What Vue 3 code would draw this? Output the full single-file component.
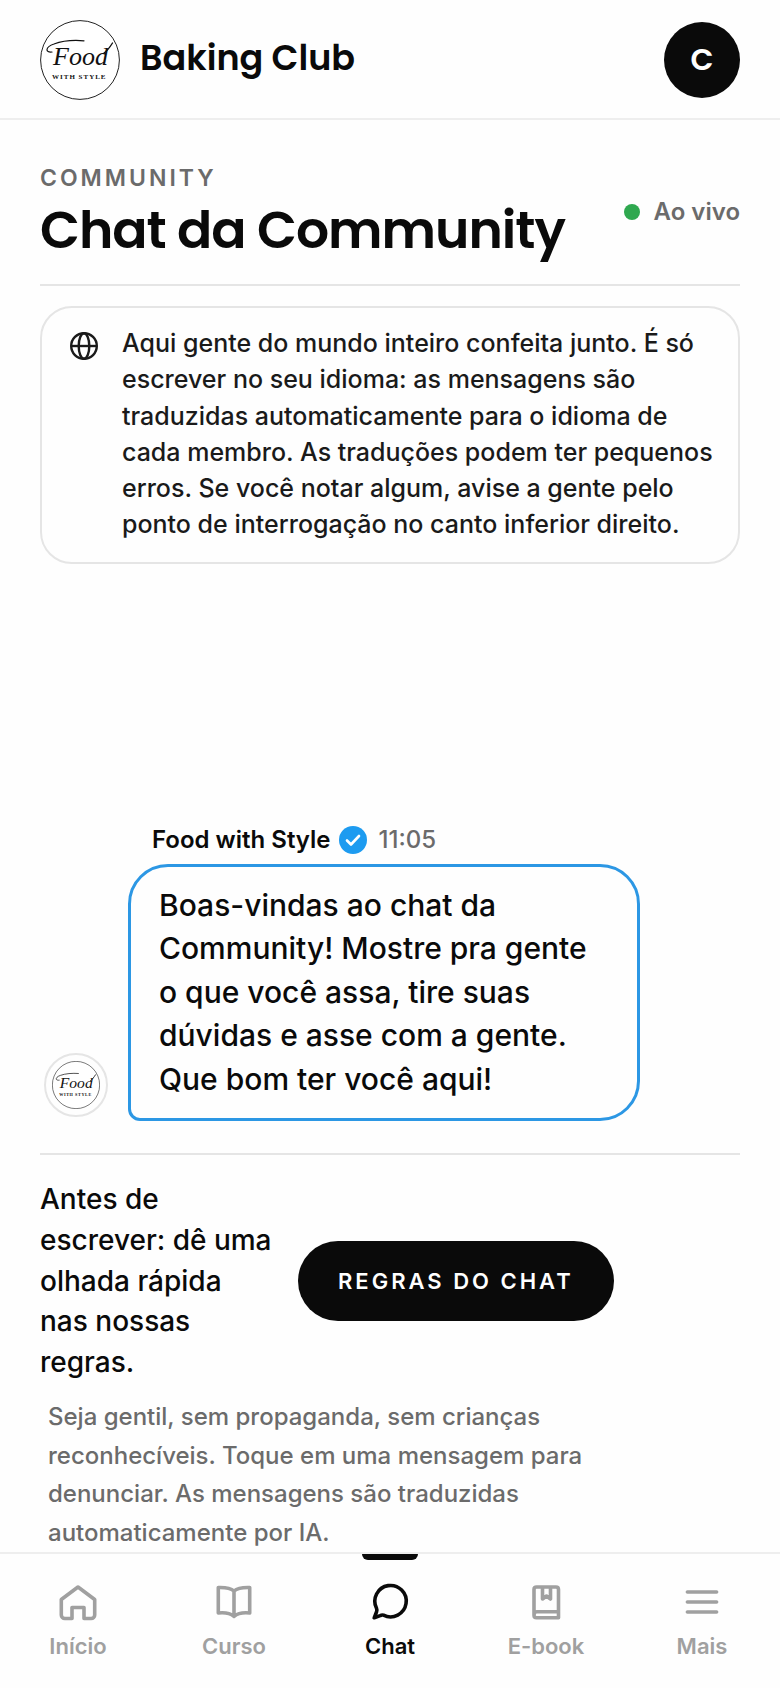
<script setup>
import { h } from 'vue'

const tabs = [
  { id: 'home', label: 'Início' },
  { id: 'course', label: 'Curso' },
  { id: 'chat', label: 'Chat', active: true },
  { id: 'ebook', label: 'E-book' },
  { id: 'more', label: 'Mais' },
]

// Round brand mark, shared by the top bar and the sender's avatar.
const BrandLogo = () =>
  h('svg', { viewBox: '0 0 80 80', role: 'img', 'aria-label': 'Food with Style' }, [
    h('circle', { cx: 40, cy: 40, r: 39.4, fill: '#fff', stroke: '#222', 'stroke-width': 1 }),
    h('path', {
      d: 'M12 32C5 33 5 27 14 24C22 21 34 20 44 20.800',
      fill: 'none',
      stroke: '#111',
      'stroke-width': 1.2,
      'stroke-linecap': 'round',
    }),
    h('text', { x: 13, y: 45, class: 'brand-script' }, 'Food'),
    h('path', {
      d: 'M64 33C67 31 70 27 72.500 23',
      fill: 'none',
      stroke: '#111',
      'stroke-width': 1.4,
      'stroke-linecap': 'round',
    }),
    h('text', { x: 12, y: 59, class: 'brand-caps' }, 'WITH STYLE'),
  ])
</script>

<template>
  <div class="app">
    <header class="topbar">
      <a class="brand" href="#">
        <BrandLogo class="brand-logo" />
        <span class="brand-name">Baking Club</span>
      </a>
      <button class="profile" type="button" aria-label="Perfil">C</button>
    </header>

    <main class="page">
      <div class="heading">
        <div>
          <p class="eyebrow">COMMUNITY</p>
          <h1 class="title">Chat da Community</h1>
        </div>
        <p class="live"><span class="dot"></span>Ao vivo</p>
      </div>

      <section class="notice">
        <svg class="globe" viewBox="0 0 28 28" aria-hidden="true">
          <circle cx="14" cy="14" r="12.800" />
          <ellipse cx="14" cy="14" rx="5.300" ry="12.800" />
          <path d="M1 14H27" />
        </svg>
        <p>Aqui gente do mundo inteiro confeita junto. É só escrever no seu idioma: as mensagens são traduzidas automaticamente para o idioma de cada membro. As traduções podem ter pequenos erros. Se você notar algum, avise a gente pelo ponto de interrogação no canto inferior direito.</p>
      </section>

      <section class="messages">
        <article class="message">
          <span class="sender-avatar"><BrandLogo class="sender-logo" /></span>
          <div class="message-body">
            <div class="meta">
              <strong>Food with Style</strong>
              <svg class="verified" viewBox="0 0 28 28" role="img" aria-label="Verificado">
                <circle cx="14" cy="14" r="14" fill="#1d9bf0" />
                <path d="M8 14.500L12 18.500L20 10" fill="none" stroke="#fff" stroke-width="2.600" stroke-linecap="round" stroke-linejoin="round" />
              </svg>
              <time>11:05</time>
            </div>
            <p class="bubble">Boas-vindas ao chat da Community! Mostre pra gente o que você assa, tire suas dúvidas e asse com a gente. Que bom ter você aqui!</p>
          </div>
        </article>
      </section>

      <section class="rules">
        <div class="rules-row">
          <p class="rules-text">Antes de escrever: dê uma olhada rápida nas nossas regras.</p>
          <button class="rules-button" type="button">REGRAS DO CHAT</button>
        </div>
        <p class="hint">Seja gentil, sem propaganda, sem crianças reconhecíveis. Toque em uma mensagem para denunciar. As mensagens são traduzidas automaticamente por IA.</p>
      </section>
    </main>

    <nav class="tabs" aria-label="Principal">
      <a v-for="tab in tabs" :key="tab.id" href="#" class="tab" :class="{ active: tab.active }" :aria-current="tab.active ? 'page' : undefined">
        <svg viewBox="0 0 40 40" aria-hidden="true">
          <path v-if="tab.id === 'home'" d="M20 5L36.700 17.500V33A3.500 3.500 0 0 1 33.200 36.500H26V25.500H14V36.500H6.800A3.500 3.500 0 0 1 3.300 33V17.500Z" />
          <path v-else-if="tab.id === 'course'" d="M20 9C16 5.500 10 5.300 4.300 5.500V31C11 30.300 16 31 20 34.500C24 31 29 30.300 35.700 31V5.500C30 5.300 24 5.500 20 9V34.500" />
          <path v-else-if="tab.id === 'chat'" d="M13.500 33.200A15.700 15.700 0 1 0 6.500 26.200Q7.300 28 6.500 30L4.200 35.800L10.200 33.600Q12 32.600 13.500 33.200Z" />
          <path v-else-if="tab.id === 'ebook'" d="M10.500 5H30Q32.500 5 32.500 7.500V35.700H10.500Q8 35.700 8 33.200V7.500Q8 5 10.500 5ZM8 33Q8 29.800 11 29.800H32.500M16.500 5V17L20.500 14L24.500 17V5" />
          <path v-else d="M5.400 10H34.600M5.400 20H34.600M5.400 30H34.600" />
        </svg>
        <span>{{ tab.label }}</span>
      </a>
    </nav>
  </div>
</template>

<style>
body {
  margin: 0;
  background: #fff;
}
.brand-script {
  font: italic 26px "Liberation Serif", serif;
  fill: #111;
}
.brand-caps {
  font: bold 7px "Liberation Serif", serif;
  letter-spacing: 1px;
  fill: #111;
}
</style>

<style scoped>
.app {
  min-height: 100vh;
  display: flex;
  flex-direction: column;
  background: #fefefe;
  color: #0a0a0a;
  font-family: Inter, "Liberation Sans", sans-serif;
  font-size: 24px;
  font-weight: 500;
}
p,
h1 {
  margin: 0;
}
a {
  color: inherit;
  text-decoration: none;
}
button {
  border: 0;
  background: #0a0a0a;
  color: #fff;
  font-family: inherit;
  cursor: pointer;
}
.topbar {
  display: flex;
  align-items: center;
  justify-content: space-between;
  padding: 20px 40px 18px;
  border-bottom: 2px solid #eee;
}
.brand {
  display: flex;
  align-items: center;
  gap: 20px;
}
.brand-logo {
  width: 80px;
  height: 80px;
}
.brand-name {
  padding-bottom: 4px;
  font: 600 35px/44px Poppins, Inter, sans-serif;
}
.profile {
  width: 76px;
  height: 76px;
  padding: 0;
  border-radius: 50%;
  font: 600 30px/36px Poppins, Inter, sans-serif;
}
.page {
  flex: 1;
  display: flex;
  flex-direction: column;
  padding: 0 40px;
}
.heading {
  display: flex;
  align-items: center;
  justify-content: space-between;
  padding: 40px 0 20px;
  border-bottom: 2px solid #e5e5e5;
}
.eyebrow {
  color: #6b6b6b;
  font-size: 23px;
  font-weight: 600;
  line-height: 36px;
  letter-spacing: 3px;
}
.title {
  font: 600 52px/68px Poppins, Inter, sans-serif;
  letter-spacing: -1px;
}
.live {
  display: flex;
  align-items: center;
  gap: 14px;
  color: #6b6b6b;
  font-weight: 600;
  line-height: 36px;
}
.dot {
  width: 16px;
  height: 16px;
  border-radius: 50%;
  background: #2fa84f;
}
.notice {
  display: flex;
  gap: 24px;
  margin-top: 20px;
  padding: 17px 24px 19px 28px;
  border: 2px solid #e5e5e5;
  border-radius: 32px;
  color: #1a1a1a;
  font-size: 25px;
  line-height: 1.45;
}
.globe {
  flex: none;
  width: 28px;
  height: 28px;
  margin-top: 7px;
  fill: none;
  stroke: #1a1a1a;
  stroke-width: 2.4;
}
.messages {
  flex: 1;
  display: flex;
  flex-direction: column;
  justify-content: flex-end;
  padding-bottom: 32px;
}
.message {
  display: flex;
  align-items: flex-end;
  gap: 20px;
  padding: 0 4px;
}
.sender-avatar {
  flex: none;
  box-sizing: border-box;
  display: flex;
  align-items: center;
  justify-content: center;
  width: 64px;
  height: 64px;
  margin-bottom: 4px;
  border: 2px solid #e5e5e5;
  border-radius: 50%;
}
.sender-logo {
  width: 48px;
  height: 48px;
}
.message-body {
  max-width: 512px;
}
.meta {
  display: flex;
  align-items: center;
  gap: 8px;
  padding-left: 24px;
  margin-bottom: 6px;
  line-height: 36px;
}
.meta strong {
  font-weight: 600;
}
.meta time {
  margin-left: 4px;
  color: #6b6b6b;
}
.verified {
  width: 28px;
  height: 28px;
}
.bubble {
  padding: 17px 28px;
  border: 3px solid #2c97e4;
  border-radius: 40px 40px 40px 12px;
  font-size: 30px;
  line-height: 1.45;
}
.rules {
  border-top: 2px solid #e5e5e5;
  padding-top: 24px;
}
.rules-row {
  display: flex;
  align-items: center;
  gap: 24px;
}
.rules-text {
  width: 234px;
  font-size: 28px;
  line-height: 1.45;
}
.rules-button {
  height: 80px;
  padding: 0 40px;
  border-radius: 40px;
  font-size: 22px;
  font-weight: 600;
  letter-spacing: 3px;
}
.hint {
  max-width: 560px;
  padding: 16px 8px 0;
  color: #6b6b6b;
  line-height: 1.6;
}
.tabs {
  display: grid;
  grid-template-columns: repeat(5, 1fr);
  border-top: 2px solid #eee;
}
.tab {
  position: relative;
  display: flex;
  flex-direction: column;
  align-items: center;
  gap: 8px;
  padding: 28px 0 26px;
  color: #a0a0a0;
  font-size: 22px;
  font-weight: 600;
  line-height: 32px;
}
.tab svg {
  width: 40px;
  height: 40px;
  fill: none;
  stroke: currentColor;
  stroke-width: 3.6;
  stroke-linecap: round;
  stroke-linejoin: round;
}
.tab.active {
  color: #0a0a0a;
}
.tab.active::before {
  content: "";
  position: absolute;
  top: 0;
  width: 56px;
  height: 6px;
  border-radius: 0 0 6px 6px;
  background: #0a0a0a;
}
</style>
